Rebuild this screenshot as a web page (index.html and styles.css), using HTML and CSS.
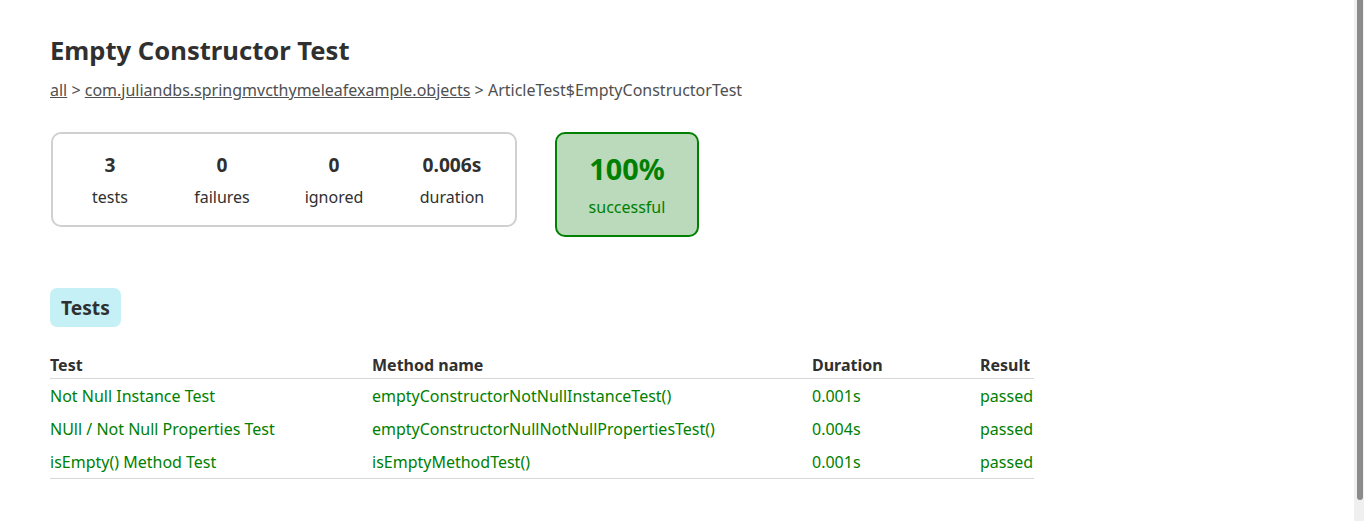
FILE: index.html
```html
<!DOCTYPE html>
<html lang="en">
<head>
<meta charset="utf-8">
<title>Test results - ArticleTest$EmptyConstructorTest</title>
<link rel="stylesheet" href="styles.css">
</head>
<body>
<div class="content">
  <h1 class="title">Empty Constructor Test</h1>
  <div class="breadcrumbs">
    <a href="#">all</a> &gt; <a href="#">com.juliandbs.springmvcthymeleafexample.objects</a> &gt; ArticleTest$EmptyConstructorTest
  </div>
  <div class="summary">
    <div class="summary-group">
      <div class="info-box">
        <div class="counter">3</div>
        <p class="label">tests</p>
      </div>
      <div class="info-box">
        <div class="counter">0</div>
        <p class="label">failures</p>
      </div>
      <div class="info-box">
        <div class="counter">0</div>
        <p class="label">ignored</p>
      </div>
      <div class="info-box info-box-wide">
        <div class="counter">0.006s</div>
        <p class="label">duration</p>
      </div>
    </div>
    <div class="success-rate">
      <div class="percent">100%</div>
      <p class="label">successful</p>
    </div>
  </div>
  <ul class="tab-links">
    <li class="tab selected">Tests</li>
  </ul>
  <table class="results">
    <colgroup>
      <col class="col-test">
      <col class="col-method">
      <col class="col-duration">
      <col class="col-result">
    </colgroup>
    <thead>
      <tr>
        <th>Test</th>
        <th>Method name</th>
        <th>Duration</th>
        <th>Result</th>
      </tr>
    </thead>
    <tbody>
      <tr class="success">
        <td>Not Null Instance Test</td>
        <td>emptyConstructorNotNullInstanceTest()</td>
        <td>0.001s</td>
        <td>passed</td>
      </tr>
      <tr class="success">
        <td>NUll / Not Null Properties Test</td>
        <td>emptyConstructorNullNotNullPropertiesTest()</td>
        <td>0.004s</td>
        <td>passed</td>
      </tr>
      <tr class="success">
        <td>isEmpty() Method Test</td>
        <td>isEmptyMethodTest()</td>
        <td>0.001s</td>
        <td>passed</td>
      </tr>
    </tbody>
  </table>
</div>
<div class="scrollbar" aria-hidden="true">
  <div class="scrollbar-thumb"></div>
</div>
</body>
</html>
```

FILE: styles.css
```css
html, body {
  margin: 0;
  padding: 0;
}

body {
  font-family: "Noto Sans", "Open Sans", sans-serif;
  font-size: 16px;
  color: #303030;
  background: #ffffff;
  overflow: hidden;
}

a, a:visited {
  color: inherit;
}

.content {
  padding: 33px 50px 0 50px;
}

.title {
  margin: 0 0 11px 0;
  font-size: 25.6px;
  font-weight: bold;
  line-height: normal;
}

.breadcrumbs {
  line-height: normal;
  color: #505050;
}

.summary {
  margin-top: 31px;
  display: flex;
  align-items: flex-start;
  gap: 38px;
}

.summary-group {
  display: flex;
  gap: 2px;
  padding: 2px;
  border: 2px solid #d0d0d0;
  border-radius: 10px;
  margin-left: 1px;
}

.info-box {
  width: 110px;
  padding: 15px 0;
  text-align: center;
}

.info-box-wide {
  width: 122px;
}

.counter {
  font-size: 19.2px;
  font-weight: bold;
  margin-bottom: 8px;
}

.label {
  margin: 0;
}

.success-rate {
  width: 140px;
  padding: 15px 0 17px 0;
  text-align: center;
  color: #008000;
  background: #bbd9bb;
  border: 2px solid #008000;
  border-radius: 10px;
}

.percent {
  font-size: 28.8px;
  font-weight: bold;
  margin-bottom: 8px;
}

.tab-links {
  list-style: none;
  margin: 51px 0 0 0;
  padding: 0;
  display: flex;
}

.tab {
  padding: 6px 11px;
  font-size: 19.2px;
  font-weight: bold;
  border-radius: 7px;
}

.tab.selected {
  background: #c5f0f5;
}

.results {
  margin-top: 27px;
  border-collapse: collapse;
  table-layout: fixed;
  width: 984px;
}

.col-test { width: 322px; }
.col-method { width: 440px; }
.col-duration { width: 168px; }
.col-result { width: 54px; }

.results th {
  text-align: left;
  font-weight: bold;
  padding: 0 0 2px 0;
  border-bottom: 1px solid #d8d8d8;
  white-space: nowrap;
}

.results td {
  padding: 5.5px 0;
  white-space: nowrap;
}

.results tbody tr:last-child td {
  border-bottom: 1px solid #d8d8d8;
}

.success td {
  color: #008000;
}

.scrollbar {
  position: fixed;
  top: 0;
  right: 0;
  bottom: 0;
  width: 10px;
  background: #f0f0f0;
}

.scrollbar-thumb {
  margin: 0 1px 0 3px;
  height: 500px;
  background: #8a8b8d;
  border-radius: 0 0 3px 3px;
}
```
